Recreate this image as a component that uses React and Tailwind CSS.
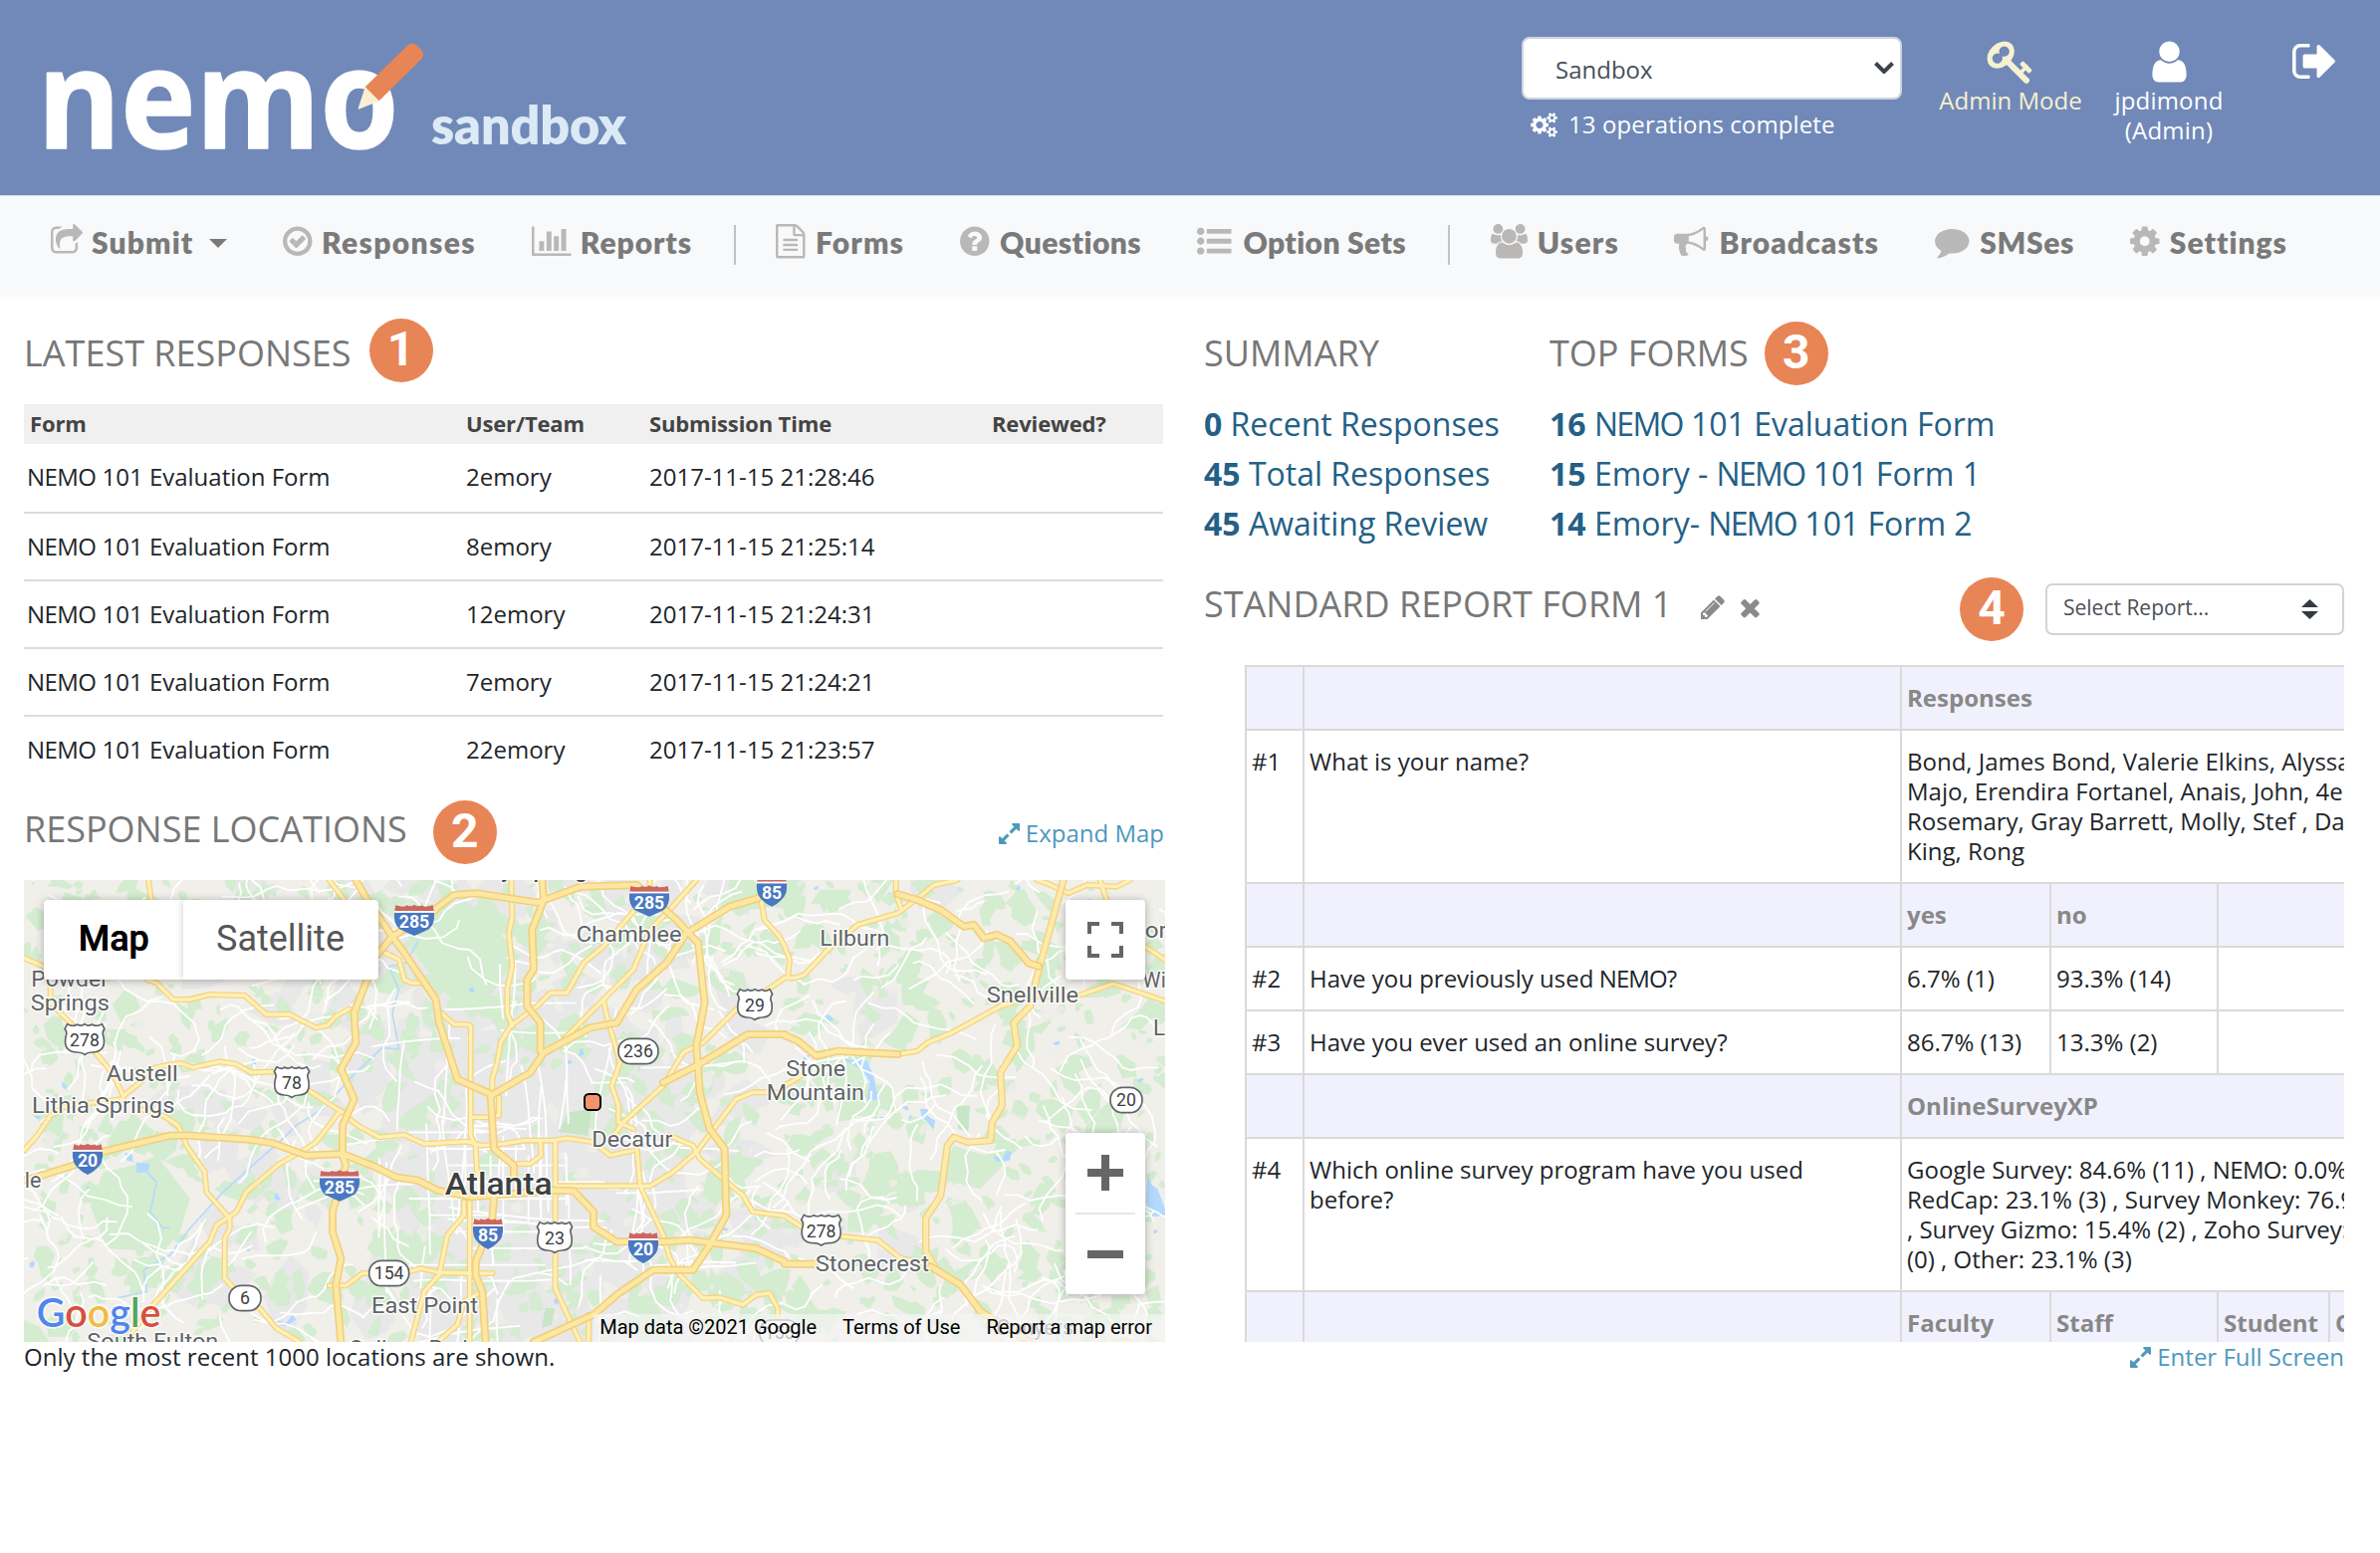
import React from "react";

/* ---------- Icons ---------- */

const ICONS = {
  share: ["64 0 1664 1792", "M1472 989v259q0 119-84.5 203.5t-203.5 84.5h-832q-119 0-203.5-84.5t-84.5-203.5v-832q0-119 84.5-203.5t203.5-84.5h255q13 0 22.5 9.5t9.5 22.5q0 27-26 32-77 26-133 60-10 4-16 4h-112q-66 0-113 47t-47 113v832q0 66 47 113t113 47h832q66 0 113-47t47-113v-214q0-19 18-29 28-13 54-37 16-16 35-8 21 9 21 29zm237-496l-384 384q-18 19-45 19-12 0-25-5-39-17-39-59v-192h-160q-323 0-438 131-119 137-74 473 3 23-20 34-8 2-12 2-16 0-26-13-10-14-21-31t-39.5-68.5-49.5-99.5-38.5-114-17.5-122q0-49 3.5-91t14-90 28-88 47-81.5 68.5-74 94.5-61.5 124.5-48.5 159.5-30.5 196.5-11h160v-192q0-42 39-59 13-5 25-5 26 0 45 19l384 384q19 19 19 45t-19 45z"],
  check: ["128 0 1536 1792", "M1299 813l-422 422q-19 19-45 19t-45-19l-294-294q-19-19-19-45t19-45l102-102q19-19 45-19t45 19l147 147 275-275q19-19 45-19t45 19l102 102q19 19 19 45t-19 45zm141 83q0-148-73-273t-198-198-273-73-273 73-198 198-73 273 73 273 198 198 273 73 273-73 198-198 73-273zm224 0q0 209-103 385.5t-279.5 279.5-385.5 103-385.5-103-279.5-279.5-103-385.5 103-385.5 279.5-279.5 385.5-103 385.5 103 279.5 279.5 103 385.5z"],
  chart: ["0 0 2048 1792", "M640 896v512h-256v-512h256zm384-512v1024h-256v-1024h256zm1024 1152v128h-2048v-1536h128v1408h1920zm-640-896v768h-256v-768h256zm384-384v1152h-256v-1152h256z"],
  file: ["128 0 1536 1792", "M1596 380q28 28 48 76t20 88v1152q0 40-28 68t-68 28h-1344q-40 0-68-28t-28-68v-1600q0-40 28-68t68-28h896q40 0 88 20t76 48zm-444-244v376h376q-10-29-22-41l-313-313q-12-12-41-22zm384 1528v-1024h-416q-40 0-68-28t-28-68v-416h-768v1536h1280zm-1024-864q0-14 9-23t23-9h704q14 0 23 9t9 23v64q0 14-9 23t-23 9h-704q-14 0-23-9t-9-23v-64zm736 224q14 0 23 9t9 23v64q0 14-9 23t-23 9h-704q-14 0-23-9t-9-23v-64q0-14 9-23t23-9h704zm0 256q14 0 23 9t9 23v64q0 14-9 23t-23 9h-704q-14 0-23-9t-9-23v-64q0-14 9-23t23-9h704z"],
  question: ["128 0 1536 1792", "M1024 1376v-192q0-14-9-23t-23-9h-192q-14 0-23 9t-9 23v192q0 14 9 23t23 9h192q14 0 23-9t9-23zm256-672q0-88-55.5-163t-138.5-116-170-41q-243 0-371 213-15 24 8 42l132 100q7 6 19 6 16 0 25-12 53-68 86-92 34-24 86-24 48 0 85.5 26t37.5 59q0 38-20 61t-68 45q-63 28-115.5 86.5t-52.5 125.5v36q0 14 9 23t23 9h192q14 0 23-9t9-23q0-19 21.5-49.5t54.5-49.5q32-18 49-28.5t46-35 44.5-48 28-60.5 12.5-81zm384 192q0 209-103 385.5t-279.5 279.5-385.5 103-385.5-103-279.5-279.5-103-385.5 103-385.5 279.5-279.5 385.5-103 385.5 103 279.5 279.5 103 385.5z"],
  list: ["0 0 1792 1792", "M384 1408q0 80-56 136t-136 56-136-56-56-136 56-136 136-56 136 56 56 136zm0-512q0 80-56 136t-136 56-136-56-56-136 56-136 136-56 136 56 56 136zm1408 416v192q0 13-9.5 22.5t-22.5 9.5h-1216q-13 0-22.5-9.5t-9.5-22.5v-192q0-13 9.5-22.5t22.5-9.5h1216q13 0 22.5 9.5t9.5 22.5zm-1408-928q0 80-56 136t-136 56-136-56-56-136 56-136 136-56 136 56 56 136zm1408 416v192q0 13-9.5 22.5t-22.5 9.5h-1216q-13 0-22.5-9.5t-9.5-22.5v-192q0-13 9.5-22.5t22.5-9.5h1216q13 0 22.5 9.5t9.5 22.5zm0-512v192q0 13-9.5 22.5t-22.5 9.5h-1216q-13 0-22.5-9.5t-9.5-22.5v-192q0-13 9.5-22.5t22.5-9.5h1216q13 0 22.5 9.5t9.5 22.5z"],
  users: ["0 0 1920 1792", "M593 896q-162 5-265 128h-134q-82 0-138-40.5t-56-118.5q0-353 124-353 6 0 43.5 21t97.5 42.5 119 21.5q67 0 133-23-5 37-5 66 0 143 81 256zm1071 637q0 120-73 189.5t-194 69.5h-874q-121 0-194-69.5t-73-189.5q0-53 3.5-103.5t14-109 26.5-108.5 43-97.5 62-81 85.5-53.5 111.5-20q10 0 43 21.5t73 48 107 48 135 21.5 135-21.5 107-48 73-48 43-21.5q61 0 111.5 20t85.5 53.5 62 81 43 97.5 26.5 108.5 14 109 3.5 103.5zm-1024-1277q0 106-75 181t-181 75-181-75-75-181 75-181 181-75 181 75 75 181zm704 384q0 159-112.5 271.5t-271.5 112.5-271.5-112.5-112.5-271.5 112.5-271.5 271.5-112.5 271.5 112.5 112.5 271.5zm576 225q0 78-56 118.5t-138 40.5h-134q-103-123-265-128 81-113 81-256 0-29-5-66 66 23 133 23 59 0 119-21.5t97.5-42.5 43.5-21q124 0 124 353zm-128-609q0 106-75 181t-181 75-181-75-75-181 75-181 181-75 181 75 75 181z"],
  horn: ["0 0 1792 1792", "M1664 640q53 0 90.5 37.5t37.5 90.5-37.5 90.5-90.5 37.5v384q0 52-38 90t-90 38q-417-347-812-380-58 19-91 66t-31 100.5 40 92.5q-20 33-23 65.5t6 58 33.5 55 48 50 61.5 50.5q-29 58-111.5 83t-168.5 11.5-132-55.5q-7-23-29.5-87.5t-32-94.5-23-89-15-101 3.5-98.5 22-110.5h-122q-66 0-113-47t-47-113v-192q0-66 47-113t113-47h480q435 0 896-384 52 0 90 38t38 90v384zm-128 604v-954q-394 302-768 343v270q377 42 768 341z"],
  comment: ["0 0 1792 1792", "M1792 896q0 174-120 321.5t-326 233-450 85.5q-70 0-145-8-198 175-460 242-49 14-114 22-17 2-30.5-9t-17.5-29v-1q-3-4-.5-12t2-10 4.5-9.5l6-9 7-8.5 8-9q7-8 31-34.5t34.5-38 31-39.5 32.5-51 27-59 26-76q-157-89-247.5-220t-90.5-281q0-130 71-248.5t191-204.5 286-136.5 348-50.5q244 0 450 85.5t326 233 120 321.5z"],
  cog: ["128 0 1536 1792", "M1152 896q0-106-75-181t-181-75-181 75-75 181 75 181 181 75 181-75 75-181zm512-109v222q0 12-8 23t-20 13l-185 28q-19 54-39 91 35 50 107 138 10 12 10 25t-9 23q-27 37-99 108t-94 71q-12 0-26-9l-138-108q-44 23-91 38-16 136-29 186-7 28-36 28h-222q-14 0-24.5-8.5t-11.5-21.5l-28-184q-49-16-90-37l-141 107q-10 9-25 9-14 0-25-11-126-114-165-168-7-10-7-23 0-12 8-23 15-21 51-66.5t54-70.5q-27-50-41-99l-183-27q-13-2-21-12.5t-8-23.5v-222q0-12 8-23t19-13l186-28q14-46 39-92-40-57-107-138-10-12-10-24 0-10 9-23 26-36 98.5-107.5t94.5-71.5q13 0 26 10l138 107q44-23 91-38 16-136 29-186 7-28 36-28h222q14 0 24.5 8.5t11.5 21.5l28 184q49 16 90 37l142-107q9-9 24-9 13 0 25 10 129 119 165 170 7 8 7 22 0 12-8 23-15 21-51 66.5t-54 70.5q26 50 41 98l183 28q13 2 21 12.5t8 23.5z"],
  cogs: ["0 0 1920 1792", "M896 896q0-106-75-181t-181-75-181 75-75 181 75 181 181 75 181-75 75-181zm768 512q0-52-38-90t-90-38-90 38-38 90q0 53 37.5 90.5t90.5 37.5 90.5-37.5 37.5-90.5zm0-1024q0-52-38-90t-90-38-90 38-38 90q0 53 37.5 90.5t90.5 37.5 90.5-37.5 37.5-90.5zm-384 421v185q0 10-7 19.5t-16 10.5l-155 24q-11 35-32 76 34 48 90 115 7 11 7 20 0 12-7 19-23 30-82.5 89.5t-78.5 59.5q-11 0-21-7l-115-90q-37 19-77 31-11 108-23 155-7 24-30 24h-186q-11 0-20-7.5t-10-17.5l-23-153q-34-10-75-31l-118 89q-7 7-20 7-11 0-21-8-144-133-144-160 0-9 7-19 10-14 41-53t47-61q-23-44-35-82l-152-24q-10-1-17-9.5t-7-19.5v-185q0-10 7-19.5t16-10.5l155-24q11-35 32-76-34-48-90-115-7-11-7-20 0-12 7-20 22-30 82-89t79-59q11 0 21 7l115 90q34-18 77-32 11-108 23-154 7-24 30-24h186q11 0 20 7.5t10 17.5l23 153q34 10 75 31l118-89q8-7 20-7 11 0 21 8 144 133 144 160 0 8-7 19-12 16-42 54t-45 60q23 48 34 82l152 23q10 2 17 10.5t7 19.5zm640 533v140q0 16-149 31-12 27-30 52 51 113 51 138 0 4-4 7-122 71-124 71-8 0-46-47t-52-68q-20 2-30 2t-30-2q-14 21-52 68t-46 47q-2 0-124-71-4-3-4-7 0-25 51-138-18-25-30-52-149-15-149-31v-140q0-16 149-31 13-29 30-52-51-113-51-138 0-4 4-7 4-2 35-20t59-34 30-16q8 0 46 46.5t52 67.5q20-2 30-2t30 2q51-71 92-112l6-2q4 0 124 70 4 3 4 7 0 25-51 138 17 23 30 52 149 15 149 31zm0-1024v140q0 16-149 31-12 27-30 52 51 113 51 138 0 4-4 7-122 71-124 71-8 0-46-47t-52-68q-20 2-30 2t-30-2q-14 21-52 68t-46 47q-2 0-124-71-4-3-4-7 0-25 51-138-18-25-30-52-149-15-149-31v-140q0-16 149-31 13-29 30-52-51-113-51-138 0-4 4-7 4-2 35-20t59-34 30-16q8 0 46 46.5t52 67.5q20-2 30-2t30 2q51-71 92-112l6-2q4 0 124 70 4 3 4 7 0 25-51 138 17 23 30 52 149 15 149 31z"],
  key: ["0 0 1792 1792", "M832 512q0-80-56-136t-136-56-136 56-56 136q0 42 19 83-41-19-83-19-80 0-136 56t-56 136 56 136 136 56 136-56 56-136q0-42-19-83 41 19 83 19 80 0 136-56t56-136zm851 704q0 17-49 66t-66 49q-9 0-28.5-16t-36.5-33-38.5-40-24.5-26l-96 96 220 220q28 28 28 68 0 42-39 81t-81 39q-40 0-68-28l-671-671q-176 131-365 131-163 0-265.5-102.5t-102.5-265.5q0-160 95-313t248-248 313-95q163 0 265.5 102.5t102.5 265.5q0 189-131 365l355 355 96-96q-3-3-26-24.5t-40-38.5-33-36.5-16-28.5q0-17 49-66t66-49q13 0 23 10 6 6 46 44.5t82 79.5 86.5 86 73 78 28.5 41z"],
  user: ["256 0 1280 1792", "M1536 1399q0 109-62.5 187t-150.5 78h-854q-88 0-150.5-78t-62.5-187q0-85 8.5-160.5t31.5-152 58.5-131 94-89 134.5-34.5q131 128 313 128t313-128q76 0 134.5 34.5t94 89 58.5 131 31.5 152 8.5 160.5zm-256-887q0 159-112.5 271.5t-271.5 112.5-271.5-112.5-112.5-271.5 112.5-271.5 271.5-112.5 271.5 112.5 112.5 271.5z"],
  signout: ["64 0 1568 1792", "M704 1440q0 4 1 20t.5 26.5-3 23.5-10 19.5-20.5 6.5h-320q-119 0-203.5-84.5t-84.5-203.5v-704q0-119 84.5-203.5t203.5-84.5h320q13 0 22.5 9.5t9.5 22.5q0 4 1 20t.5 26.5-3 23.5-10 19.5-20.5 6.5h-320q-66 0-113 47t-47 113v704q0 66 47 113t113 47h312l11.5 1 11.5 3 8 5.5 7 9 2 13.5zm928-544q0 26-19 45l-544 544q-19 19-45 19t-45-19-19-45v-288h-448q-26 0-45-19t-19-45v-384q0-26 19-45t45-19h448v-288q0-26 19-45t45-19 45 19l544 544q19 19 19 45z"],
  expand: ["128 128 1536 1536", "M883 1056q0 13-10 23l-332 332 144 144q19 19 19 45t-19 45-45 19h-448q-26 0-45-19t-19-45v-448q0-26 19-45t45-19 45 19l144 144 332-332q10-10 23-10t23 10l114 114q10 10 10 23zm781-864v448q0 26-19 45t-45 19-45-19l-144-144-332 332q-10 10-23 10t-23-10l-114-114q-10-10-10-23t10-23l332-332-144-144q-19-19-19-45t19-45 45-19h448q26 0 45 19t19 45z"],
  pencil: ["128 128 1536 1536", "M491 1536l91-91-235-235-91 91v107h128v128h107zm523-928q0-22-22-22-10 0-17 7l-542 542q-7 7-7 17 0 22 22 22 10 0 17-7l542-542q7-7 7-17zm-54-192l416 416-832 832h-416v-416zm683 96q0 53-37 90l-166 166-416-416 166-165q36-38 90-38 53 0 91 38l235 234q37 39 37 91z"],
  times: ["302 302 1188 1284", "M1490 1322q0 40-28 68l-136 136q-28 28-68 28t-68-28l-294-294-294 294q-28 28-68 28t-68-28l-136-136q-28-28-28-68t28-68l294-294-294-294q-28-28-28-68t28-68l136-136q28-28 68-28t68 28l294 294 294-294q28-28 68-28t68 28l136 136q28 28 28 68t-28 68l-294 294 294 294q28 28 28 68z"],
};

function Icon({ name, className }) {
  const [box, d] = ICONS[name];
  return (
    <svg viewBox={box} className={className} fill="currentColor" aria-hidden="true">
      <path d={d} />
    </svg>
  );
}

/* ---------- Header ---------- */

function Logo() {
  return (
    <svg viewBox="30 30 400 130" className="ml-[30px] mt-[30px] h-[130px] w-[400px] shrink-0">
      <text x="37.5" y="149" textLength="363" lengthAdjust="spacingAndGlyphs" fill="#fff" stroke="#fff" strokeWidth="1.6" strokeLinejoin="round" fontFamily="Open Sans, sans-serif" fontWeight="700" fontSize="138">
        nemo
      </text>
      <path d="M360 109.3 L367 88 L381 101Z" fill="#fbeed6" stroke="#fbeed6" strokeWidth="1" strokeLinejoin="round" />
      <path d="M366.7 87.3 L409 46 Q414 41.5 419 46 L423 50 Q427 55 422.5 60 L380.7 101.3Z" fill="#e88556" />
    </svg>
  );
}

function Header() {
  return (
    <header className="flex h-[196px] items-start bg-[#7189b8] text-2xl leading-[30px] text-white">
      <Logo />
      <div className="mt-[95px] ml-[3px] font-['Lato',sans-serif] text-[52px] leading-[60px] font-extrabold tracking-[-0.1px] text-[#dceaf6]">sandbox</div>
      <div className="mt-[37px] ml-auto w-[382px]">
        <div className="flex h-[63px] items-center justify-between rounded-lg border-2 border-[#ced4da] bg-white pr-[6px] pl-8 text-[#495057]">
          <span className="pt-[3px]">Sandbox</span>
          <svg viewBox="0 0 20 12" className="mb-px h-3 w-5" fill="none" stroke="#3d444b" strokeWidth="4">
            <path d="M1.5 1.5 L10 10 L18.500 1.500" />
          </svg>
        </div>
        <div className="mt-[10px] ml-[9px] flex items-center gap-[11px] tracking-[0.1px]">
          <Icon name="cogs" className="h-[25px] w-[27px]" />
          <span>13 operations complete</span>
        </div>
      </div>
      <div className="mt-[38px] ml-[29px] flex w-[160px] flex-col items-center text-[#f6f1d0]">
        <Icon name="key" className="h-12 w-[49px]" />
        <span>Admin Mode</span>
      </div>
      <div className="mt-[38px] ml-[17px] flex w-[124px] flex-col items-center tracking-[0.2px]">
        <Icon name="user" className="h-12 w-[35px]" />
        <span>jpdimond</span>
        <span>(Admin)</span>
      </div>
      <Icon name="signout" className="mt-[37px] mr-[45px] ml-[62px] h-[49px] w-[43px]" />
    </header>
  );
}

/* ---------- Navigation ---------- */

const NAV = [
  { icon: "share", iconCls: "w-8", label: "Submit", cls: "ml-[51px] w-[177px]", track: "ml-[9px] mr-auto tracking-[1.1px]", caret: true },
  { icon: "check", iconCls: "w-[29.5px]", label: "Responses", cls: "ml-[56px] w-[194px]", track: "tracking-[1.35px]" },
  { icon: "chart", iconCls: "w-[39.5px]", label: "Reports", cls: "ml-[56px] w-[161px]", track: "tracking-[0.9px]" },
  null,
  { icon: "file", iconCls: "w-[29.5px]", label: "Forms", cls: "ml-[40px] w-[129px]", track: "tracking-[1.1px]" },
  { icon: "question", iconCls: "w-[29.5px]", label: "Questions", cls: "ml-[56px] w-[182px]", track: "tracking-[0.4px]" },
  { icon: "list", iconCls: "w-[34.5px]", label: "Option Sets", cls: "ml-[56px] w-[210px]", track: "tracking-[0.35px]" },
  null,
  { icon: "users", iconCls: "w-[37px]", label: "Users", cls: "ml-[41px] w-[129px]", track: "tracking-[1.2px]" },
  { icon: "horn", iconCls: "w-[34.5px]", label: "Broadcasts", cls: "ml-[55px] w-[206px]", track: "tracking-[1.09px]" },
  { icon: "comment", iconCls: "w-[34.5px]", label: "SMSes", cls: "ml-[56px] w-[140px]", track: "tracking-[0.65px]" },
  { icon: "cog", iconCls: "w-[29.5px]", label: "Settings", cls: "ml-[56px] w-[158px]", track: "tracking-[1px]" },
];

function Nav() {
  return (
    <nav className="flex h-[102px] items-start border-t border-[#d5dced] bg-[#f8f9fb] pt-7 font-['Lato',sans-serif] text-[30px] leading-9 font-extrabold text-[#7a7a7a]">
      {NAV.map((n, i) =>
        n ? (
          <a key={i} className={`flex shrink-0 justify-between ${n.cls}`}>
            <Icon name={n.icon} className={`h-[34.5px] shrink-0 text-[#bab8b6] ${n.iconCls}`} />
            <span className={`whitespace-nowrap ${n.track}`}>{n.label}</span>
            {n.caret && <span className="mt-[15px] h-0 w-0 border-x-[9px] border-t-[9px] border-x-transparent border-t-[#7a7a7a]" />}
          </a>
        ) : (
          <span key={i} className="mt-[1px] ml-[42px] h-10 w-[2px] bg-[#c2c2c2]" />
        )
      )}
    </nav>
  );
}

function Badge({ children, className }) {
  return (
    <span className={`flex h-16 w-16 shrink-0 items-center justify-center rounded-full bg-[#e88556] pb-[3px] font-['Roboto',sans-serif] text-[48px] leading-none font-bold text-white ${className}`}>
      {children}
    </span>
  );
}

/* ---------- Map ---------- */

function rng(seed) {
  let a = seed;
  return () => {
    a = (a + 0x6d2b79f5) | 0;
    let t = Math.imul(a ^ (a >>> 15), 1 | a);
    t = (t + Math.imul(t ^ (t >>> 7), 61 | t)) ^ t;
    return ((t ^ (t >>> 14)) >>> 0) / 4294967296;
  };
}

function blob(r, cx, cy, size) {
  const n = 5 + Math.floor(r() * 4);
  const rot = r() * Math.PI;
  const sq = 0.4 + r() * 0.5;
  let d = "";
  for (let i = 0; i < n; i++) {
    const a = (i / n) * Math.PI * 2;
    const rad = size * (0.45 + r() * 0.8);
    const x = Math.cos(a) * rad;
    const y = Math.sin(a) * rad * sq;
    d += `${i ? "L" : "M"}${(cx + x * Math.cos(rot) - y * Math.sin(rot)).toFixed(0)} ${(cy + x * Math.sin(rot) + y * Math.cos(rot)).toFixed(0)}`;
  }
  return d + "Z";
}

function terrain() {
  const r = rng(77);
  let urban = "";
  let park = "";
  let sand = "";
  let lake = "";
  for (let i = 0; i < 190; i++) {
    const x = (r() + r() + r()) / 3 * 2900 + 60;
    urban += blob(r, x, r() * 1392, 50 + r() * 70);
  }
  for (let i = 0; i < 1150; i++) {
    const x = r() * 3438;
    const y = r() * 1392;
    const downtown = Math.hypot(x - 1480, y - 880) < 300;
    if (downtown && r() < 0.75) continue;
    park += blob(r, x, y, 14 + r() * r() * 68);
  }
  for (let i = 0; i < 220; i++) sand += blob(r, r() * 3438, r() * 1392, 12 + r() * 22);
  for (let i = 0; i < 40; i++) lake += blob(r, r() * 3438, r() * 1392, 5 + r() * 9);
  return { urban, park, sand, lake };
}

function streets() {
  const r = rng(2021);
  let d = "";
  for (let i = 0; i < 350; i++) {
    let x = r() * 3438;
    let y = r() * 1392;
    const center = Math.hypot(x - 1550, y - 850) < 520;
    const grid = center && r() < 0.6;
    let a = grid ? Math.floor(r() * 4) * (Math.PI / 2) : r() * Math.PI * 2;
    d += `M${x.toFixed(0)} ${y.toFixed(0)}`;
    const n = 4 + Math.floor(r() * 8);
    for (let k = 0; k < n; k++) {
      a += (r() - 0.5) * (grid ? 0.15 : 1.5);
      const s = 20 + r() * 36;
      x += Math.cos(a) * s;
      y += Math.sin(a) * s;
      d += `L${x.toFixed(0)} ${y.toFixed(0)}`;
    }
  }
  for (let k = 0; k < 9; k++) {
    d += `M${1330 + k * 38} ${770 + (k % 3) * 30}v${150 + (k % 4) * 50}`;
    d += `M${1160 + (k % 4) * 60} ${760 + k * 50}h${230 + (k % 5) * 60}`;
  }
  return d;
}

const LAND = terrain();
const STREETS = streets();

const ROADS = [
  ["M0 235L60 260", "M375 0L385 70", "M80 320V370L150 440L265 580L300 650", "M370 300L400 310L450 360H500L560 345L665 348L730 405H800L880 445L915 438L940 410L980 388", "M300 650L350 610L380 570L420 560L470 552L510 565L590 547L640 555L685 580L770 577L860 635L920 675L960 700", "M0 815L40 770L80 710L130 680L300 660", "M350 690L420 710L465 740L490 800L545 880L550 940L620 1020V1050L605 1080V1200L660 1260L710 1290L760 1350L830 1392", "M950 700L880 790L850 810L770 855L670 940L640 1000L580 1040L560 1090L390 1280L320 1370", "M920 1222H970L1020 1185H1060", "M920 0L965 60", "M980 720L1010 742L1070 775L1146 768", "M1080 215L1130 240L1146 300L1166 310H1206"],
  ["M322 0L325 110L315 160L325 260L310 330V400L325 440", "M690 95L600 200L540 250L490 340H440L400 380L320 440L290 490L280 550L265 600V650", "M880 0L790 100L740 150L690 270L600 360L470 490L430 520", "M600 360L610 410L650 550L625 620L645 680V730L690 750", "M110 400L150 435H190Q200 436 200 446V770L215 800L220 900", "M200 715H270", "M0 768L60 795L190 788L230 800L300 795L360 785H450L490 778L570 790L620 830L690 815", "M455 785V1230L500 1330L530 1392", "M455 922H740L810 880L880 820L1000 660L1050 640H1146", "M700 800L710 920L780 1070L800 1140L830 1190L900 1260L950 1258L1020 1280L1060 1250L1100 1245L1125 1290V1392", "M800 770L870 800L890 840L960 900L1020 950L1050 1000L1146 1012L1196 1045L1326 1075L1426 1085L1496 1140L1586 1160", "M180 970V1010L130 1070L105 1190L60 1240L20 1392", "M197 970V1392", "M0 1185L50 1170L100 1182L200 1185H265", "M410 785L412 830L380 855H340", "M235 1240L180 1270L160 1340L100 1392", "M1146 295L1110 320L1000 390L900 490L840 520L780 620L660 730L630 770", "M1070 30L1085 120L1130 170L1146 200L1161 240L1156 290", "M740 50V0", "M285 655V710H270", "M555 1310V1392"],
  ["M335 0V40L350 85", "M0 295H30L60 285L130 210L220 135L340 100L400 55L450 15L520 0", "M340 525L400 515L430 490L500 462L550 435L650 380L750 350H880L990 312L1146 365", "M760 0L790 10L855 40L910 15L1000 20L1040 0", "M950 0L970 60", "M1085 200L1146 240", "M1000 1392L1040 1392", "M0 620L50 590"],
];

const MID_ROADS = "M840 0L760 290L740 380L690 430L700 500L650 580L655 680L625 730L620 785L550 790L510 775L490 800L470 950L425 1020V1120L450 1160";

const FREEWAYS = [
  ["M0 905L60 888L150 860L240 818L440 770H500L680 782L750 793L850 830L960 825L1060 865L1120 895L1186 905L1246 935L1346 955L1480 945L1596 935L1656 937L1716 1000V1045L1786 1090H1936L2006 1085L2206 1110L2292 1150L2292 1157H2382", "M1000 0L1040 70L1110 170L1146 220L1241 360L1251 430L1306 600L1406 645", "M1240 90L1110 170L1060 230L1030 310L995 400L1000 490L955 570L995 660L960 740V830L970 860L930 1000V1060L955 1140L940 1220L955 1392"],
  ["M90 90L150 45L220 40L400 68L530 20L700 15L820 120L885 190L905 370L880 500L890 640L920 750L965 810L970 1010L920 1100L870 1175H750L640 1250L570 1310L390 1392", "M1065 55L980 80L850 160L790 250L700 330L640 430L560 445L420 520L380 580L260 650L270 810L330 860V900", "M270 960L265 1020L240 1090L215 1150V1190L235 1240L245 1392", "M415 0L420 60L385 150L390 270L370 300V380L410 430V515", "M780 610L880 560L1035 465H1146"],
  ["M0 468L40 485L95 530L160 515L240 520L340 525", "M340 42L400 60L470 90L540 140L570 135L600 175L640 165L680 185L735 250L765 260", "M440 1165L530 1220L590 1300L740 1392"],
];

const OFFSETS = [0, 1146, 2292];

function RoadLayer({ groups, color, width }) {
  return groups.map((g, i) => (
    <g key={i} transform={`translate(${OFFSETS[i]} 0)`} fill="none" stroke={color} strokeWidth={width} strokeLinecap="round" strokeLinejoin="round">
      {g.map((d, k) => (
        <path key={k} d={d} />
      ))}
    </g>
  ));
}

const PLACES = [
  [22, 320, 233, "Powder"], [20, 394, 238, "Springs"], [248, 606, 216, "Austell"], [24, 703, 430, "Lithia Springs"], [2, 928, 50, "le"],
  [190, 1414, 396, "South Fulton"], [978, 1434, 378, "College Park"], [1047, 1305, 321, "East Point"], [1711, 803, 243, "Decatur"],
  [1664, 187, 318, "Chamblee"], [2398, 199, 210, "Lilburn"], [2900, 370, 277, "Snellville"], [2296, 592, 179, "Stone"], [2237, 662, 295, "Mountain"],
  [2384, 1180, 343, "Stonecrest"], [3377, 175, 66, "or"], [3370, 325, 70, "Wi"], [3402, 467, 36, "L"], [2929, 1372, 233, "Conyers"],
];

function Interstate({ x, y, n }) {
  const w = n.length > 2 ? 60 : 45;
  return (
    <g transform={`translate(${x} ${y})`}>
      <path d={`M${-w} -22 Q${-w - 3} 12 ${-w + 16} 28 Q-16 42 0 48 Q16 42 ${w - 16} 28 Q${w + 3} 12 ${w} -22Z`} fill="#4878c2" />
      <path d={`M${-w + 1} -27 L${-w + 4} -44 Q${-w / 2} -36 -22 -44 Q-10 -38 0 -46 Q10 -38 22 -44 Q${w / 2} -36 ${w - 4} -44 L${w - 1} -27Z`} fill="#cc6660" />
      <path d={`M${-w} -27H${w}V-22H${-w}Z`} fill="#fff" />
      <text x="0" y="25" textAnchor="middle" fontFamily="Roboto, sans-serif" fontWeight="700" fontSize="53" fill="#fff">{n}</text>
    </g>
  );
}

function UsShield({ x, y, n }) {
  const w = n.length > 2 ? 60 : 53;
  return (
    <g transform={`translate(${x} ${y})`}>
      <path
        d={`M${-w + 8} -44 Q${-w + 24} -34 -22 -43 Q-10 -36 0 -44 Q10 -36 22 -43 Q${w - 24} -34 ${w - 8} -44 L${w} -29 Q${w - 9} -20 ${w - 3} -5 Q${w + 6} 40 22 41 Q8 41 0 48 Q-8 41 -22 41 Q${-w - 6} 40 ${-w + 3} -5 Q${-w + 9} -20 ${-w} -29Z`}
        fill="#fff" stroke="#5f6368" strokeWidth="5" strokeLinejoin="round"
      />
      <text x="0" y="24" textAnchor="middle" fontFamily="Roboto, sans-serif" fontSize="53" fill="#3c4043">{n}</text>
    </g>
  );
}

function Oval({ x, y, n }) {
  const w = n.length > 2 ? 60 : 48;
  return (
    <g transform={`translate(${x} ${y})`}>
      <rect x={-w} y="-38" width={w * 2} height="76" rx="37" fill="#fff" stroke="#5f6368" strokeWidth="5" />
      <text x="0" y="19" textAnchor="middle" fontFamily="Roboto, sans-serif" fontSize="53" fill="#3c4043">{n}</text>
    </g>
  );
}

function MapCanvas() {
  return (
    <svg viewBox="0 0 3438 1392" preserveAspectRatio="none" className="block h-[464px] w-[1146px]">
      <rect width="3438" height="1392" fill="#f0efea" />
      <path d={LAND.urban} fill="#e8e8e8" />
      <path d="M1146 480L1500 440L1700 560L2000 640L1950 900L1850 1150L1500 1350L1300 1330L1150 1100L1060 800Z" fill="#e8e8e8" />
      <path d={LAND.park} fill="#d4ecd0" />
      <path d={LAND.sand} fill="#efeee9" opacity=".8" />
      <path d="M240 880L330 860L400 830L500 960L470 1060L420 1120L250 1110L200 980ZM1160 60L1300 90L1400 70L1440 300L1350 420L1260 330L1160 200ZM330 1140L430 1130L400 1230L300 1220ZM2800 800L2960 850L2880 930L2760 900ZM2470 600L2590 620L2570 720L2450 700Z" fill="#d4ecd0" />
      <path d="M1640 700L1710 690L1700 770L1610 760ZM2810 680L2850 680L2845 760L2815 750ZM1570 1290L1600 1290L1590 1340L1560 1350Z" fill="#c8e6c6" />
      <path d={LAND.lake} fill="#b3dafe" />
      <path d="M305 822L325 825L330 850L380 855L375 880L340 882L338 850L310 845ZM2470 540L2540 545L2560 590L2570 640L2582 662L2540 664L2548 610L2525 570L2475 545ZM2700 690L2725 690L2722 710L2745 725L2740 752L2718 725L2705 715ZM2920 832L2950 838L2960 815L2975 820L2970 845L2930 850ZM3385 890L3400 920L3415 930L3438 990V1010L3400 1015L3380 970ZM765 1325L790 1335L810 1310L820 1325L790 1345L765 1340Z" fill="#b3dafe" />
      <g fill="none" stroke="#b7dafa" strokeWidth="5" strokeLinejoin="round">
        <path d="M360 1175L440 1130L500 1050L600 940L700 850L780 780L820 740L900 690L1000 580L1080 505L1130 510L1110 400L1130 330L1100 260L1150 250L1190 180" />
        <path d="M370 880L400 910L380 1000L420 1050L440 1045M360 1175L370 1240L280 1260" />
      </g>
      <path d={STREETS} fill="none" stroke="#fff" strokeWidth="5.500" strokeLinejoin="round" />
      <RoadLayer groups={ROADS} color="#f4d484" width="18" />
      <RoadLayer groups={ROADS} color="#fff0b5" width="10" />
      <RoadLayer groups={[[], [], [MID_ROADS]]} color="#f2d080" width="22" />
      <RoadLayer groups={[[], [], [MID_ROADS]]} color="#feeaab" width="14" />
      <RoadLayer groups={FREEWAYS} color="#f2cf7c" width="24" />
      <RoadLayer groups={FREEWAYS} color="#fde8a3" width="14" />
      <g fontFamily="Roboto, sans-serif" fontSize="68" fill="#5f6469" stroke="#fff" strokeOpacity=".85" strokeWidth="9" strokeLinejoin="round" paintOrder="stroke">
        {PLACES.map(([x, y, w, t]) => (
          <text key={t} x={x} y={y} textLength={w} lengthAdjust="spacingAndGlyphs">{t}</text>
        ))}
        <text x="1275" y="-8" textLength="460" fontWeight="500" fill="#4a4d50">Sandy Springs</text>
        <text x="1268" y="948" textLength="324" lengthAdjust="spacingAndGlyphs" fontWeight="500" fontSize="95" fill="#3c4043">Atlanta</text>
      </g>
      <Interstate x={192} y={840} n="20" />
      <Interstate x={951} y={920} n="285" />
      <Interstate x={1176} y={120} n="285" />
      <Interstate x={1884} y={62} n="285" />
      <Interstate x={2253} y={32} n="85" />
      <Interstate x={1398} y={1065} n="85" />
      <Interstate x={1866} y={1107} n="20" />
      <UsShield x={183} y={478} n="278" />
      <UsShield x={807} y={607} n="78" />
      <UsShield x={2202} y={373} n="29" />
      <UsShield x={1599} y={1075} n="23" />
      <UsShield x={2402} y={1053} n="278" />
      <Oval x={1100} y={1185} n="154" />
      <Oval x={666} y={1260} n="6" />
      <Oval x={1851} y={516} n="236" />
      <Oval x={3321} y={663} n="20" />
      <Oval x={2276} y={1364} n="155" />
      <rect x="1689" y="645" width="48" height="48" rx="13" fill="#f0946d" stroke="#000" strokeWidth="6" />
      <text x="38" y="1346" textLength="374" lengthAdjust="spacingAndGlyphs" fontFamily="Lato, sans-serif" fontWeight="600" fontSize="119" stroke="#fff" strokeOpacity=".75" strokeWidth="10" paintOrder="stroke">
        <tspan fill="#5186ec">G</tspan><tspan fill="#d85040">o</tspan><tspan fill="#f1bd42">o</tspan><tspan fill="#5186ec">g</tspan><tspan fill="#58a55c">l</tspan><tspan fill="#d85040">e</tspan>
      </text>
    </svg>
  );
}

function MapPanel() {
  return (
    <div className="relative h-[464px] w-[1146px] overflow-hidden font-['Roboto',sans-serif]">
      <MapCanvas />
      <div className="absolute top-5 left-5 flex h-20 w-[336px] overflow-hidden rounded-[4px] bg-white text-[36px] leading-[79px] shadow-[0_1px_8px_rgba(0,0,0,0.3)]">
        <div className="w-[140px] text-center font-medium text-black [text-shadow:0.5px_0_0_#000]">Map</div>
        <div className="w-[196px] pr-px text-center text-[#565656] shadow-[0_0_8px_rgba(0,0,0,0.2)]">Satellite</div>
      </div>
      <div className="absolute top-5 right-5 flex h-20 w-20 items-center justify-center rounded-[4px] bg-white shadow-[0_1px_8px_rgba(0,0,0,0.3)]">
        <svg viewBox="0 0 36 36" className="h-9 w-9" fill="none" stroke="#666" strokeWidth="4">
          <path d="M2 12V2H12M24 2H34V12M34 24V34H24M12 34H2V24" />
        </svg>
      </div>
      <div className="absolute top-[254px] right-5 flex h-[162px] w-20 flex-col items-center rounded-[4px] bg-white shadow-[0_1px_8px_rgba(0,0,0,0.3)]">
        <svg viewBox="0 0 36 36" className="mt-[22px] h-9 w-9" fill="#666">
          <path d="M14 0h8v14h14v8H22v14h-8V22H0v-8h14z" />
        </svg>
        <div className="mt-[22px] h-[2px] w-[60px] bg-[#e6e6e6]" />
        <div className="mt-9 h-2 w-9 bg-[#666]" />
      </div>
      <div className="absolute right-0 bottom-0 flex h-7 gap-[26px] bg-[#f5f5f5]/70 pr-[13px] pl-[6px] text-[20px] leading-[26px] whitespace-nowrap text-black">
        <span>Map data ©2021 Google</span>
        <span>Terms of Use</span>
        <span className="tracking-[-0.02px]">Report a map error</span>
      </div>
    </div>
  );
}

/* ---------- Left column ---------- */

const RESPONSES = [
  ["2emory", "2017-11-15 21:28:46"],
  ["8emory", "2017-11-15 21:25:14"],
  ["12emory", "2017-11-15 21:24:31"],
  ["7emory", "2017-11-15 21:24:21"],
  ["22emory", "2017-11-15 21:23:57"],
];

function LeftColumn() {
  return (
    <section className="w-[1146px] shrink-0">
      <div className="flex h-[108px] items-start">
        <h2 className="mt-[32px] text-[36px] leading-[50px] text-[#777]">LATEST RESPONSES</h2>
        <Badge className="mt-[22px] ml-[18px]">1</Badge>
      </div>
      <div className="w-[1144px]">
        <div className="grid h-10 grid-cols-[444px_184px_344px_1fr] bg-[#f0f0f0] text-[22px] leading-[39px] font-bold tracking-[-0.15px] text-[#444]">
          <span className="pl-[6px]">Form</span>
          <span>User/Team</span>
          <span>Submission Time</span>
          <span>Reviewed?</span>
        </div>
        {RESPONSES.map(([user, time], i) => (
          <div
            key={user}
            className={`grid grid-cols-[444px_184px_344px_1fr] text-2xl text-[#212529] ${i === 0 ? "h-[70px] leading-[66px]" : "h-[68px] leading-[66px]"} ${i < 4 ? "border-b-2 border-[#dcdcdc]" : ""}`}
          >
            <span className="pl-[3px]"><span className="tracking-[-0.6px]">NEMO</span> 101 Evaluation Form</span>
            <span>{user}</span>
            <span>{time}</span>
          </div>
        ))}
      </div>
      <div className="flex h-[96px] items-start text-2xl">
        <h2 className="mt-[20px] text-[36px] leading-[50px] text-[#777]">RESPONSE LOCATIONS</h2>
        <Badge className="mt-4 ml-[26px]">2</Badge>
        <a className="mt-[34px] ml-auto flex items-center gap-[6px] pr-px leading-[30px] text-[#4f98bd]">
          <Icon name="expand" className="h-[21px] w-[21px]" />
          Expand Map
        </a>
      </div>
      <MapPanel />
      <p className="pt-px text-2xl leading-7 tracking-[0.02px] text-[#212529]">Only the most recent 1000 locations are shown.</p>
    </section>
  );
}

/* ---------- Right column ---------- */

const HEAD = "bg-[#f1f1fd] font-bold text-[#888]";

function Row({ cells, head, tall, cols }) {
  return (
    <div className={`grid w-[1300px] ${cols} ${tall ? "h-[154px]" : "h-[64px]"} ${head ? HEAD : "bg-white text-[#212529]"}`}>
      {cells.map((c, i) => (
        <div key={i} className="border-t-2 border-l-2 border-[#dadada] pt-4 pl-[5px] text-2xl leading-[30px] whitespace-nowrap">
          {c}
        </div>
      ))}
    </div>
  );
}

const WIDE = "grid-cols-[58px_600px_642px]";
const SPLIT = "grid-cols-[58px_600px_150px_168px_324px]";
const FOUR = "grid-cols-[58px_600px_150px_168px_112px_212px]";

function ReportTable() {
  return (
    <div className="mt-[30px] ml-[41px] h-[680px] w-[1104px] overflow-hidden">
      <Row cols={WIDE} head cells={["", "", "Responses"]} />
      <Row
        cols={WIDE}
        tall
        cells={[
          "#1",
          "What is your name?",
          <>
            Bond, James Bond, Valerie Elkins, Alyssa,
            <br />
            Majo, Erendira Fortanel, Anais, John, 4emory,
            <br />
            Rosemary, Gray Barrett, Molly, Stef , Dana
            <br />
            King, Rong
          </>,
        ]}
      />
      <Row cols={SPLIT} head cells={["", "", "yes", "no", ""]} />
      <Row
        cols={SPLIT}
        cells={[
          "#2",
          <>
            Have you previously used<span className="tracking-[-0.9px]"> NEMO</span>?
          </>,
          "6.7% (1)",
          "93.3% (14)",
          "",
        ]}
      />
      <Row cols={SPLIT} cells={["#3", "Have you ever used an online survey?", "86.7% (13)", "13.3% (2)", ""]} />
      <Row cols={WIDE} head cells={["", "", "OnlineSurveyXP"]} />
      <Row
        cols={WIDE}
        tall
        cells={[
          "#4",
          <>
            Which online survey program have you used
            <br />
            before?
          </>,
          <>
            Google Survey: 84.6% (11) , <span className="tracking-[-0.6px]">NEMO</span>: 0.0% (0) ,
            <br />
            RedCap: 23.1% (3) , Survey Monkey: 76.9% (10)
            <br />, Survey Gizmo: 15.4% (2) , Zoho Survey: 0.0%
            <br />
            (0) , Other: 23.1% (3)
          </>,
        ]}
      />
      <Row cols={FOUR} head cells={["", "", "Faculty", "Staff", "Student", "Other"]} />
    </div>
  );
}

function Nemo() {
  return <span className="tracking-[-1.7px]">NEMO</span>;
}

function RightColumn() {
  return (
    <section className="ml-[39px] w-[1145px] shrink-0">
      <div className="flex">
        <div className="w-[347px]">
          <h2 className="mt-[32px] mb-[21px] text-[36px] leading-[50px] text-[#777]">SUMMARY</h2>
          <div className="text-[32px] leading-[50px] whitespace-nowrap text-[#246086]">
            <div><b>0</b> Recent Responses</div>
            <div><b>45</b> Total Responses</div>
            <div><b>45</b> Awaiting Review</div>
          </div>
        </div>
        <div>
          <div className="flex h-[103px] items-start">
            <h2 className="mt-[32px] text-[36px] leading-[50px] text-[#777]">TOP FORMS</h2>
            <Badge className="mt-[25px] ml-4">3</Badge>
          </div>
          <div className="text-[32px] leading-[50px] whitespace-nowrap text-[#246086]">
            <div><b>16</b> <Nemo /> 101 Evaluation Form</div>
            <div><b>15</b> Emory - <Nemo /> 101 Form 1</div>
            <div><b>14</b> Emory- <Nemo /> 101 Form 2</div>
          </div>
        </div>
      </div>
      <div className="mt-[29px] flex h-[58px] items-start">
        <h2 className="mt-[2px] text-[36px] leading-[50px] text-[#777]">STANDARD REPORT FORM 1</h2>
        <Icon name="pencil" className="mt-[18px] ml-[29px] h-[24px] w-[24px] text-[#8a8a8a]" />
        <Icon name="times" className="mt-[21px] ml-[16px] h-[20px] w-[19px] text-[#8a8a8a]" />
        <Badge className="ml-auto">4</Badge>
        <div className="mt-[6px] ml-[22px] flex h-[52px] w-[300px] items-start justify-between rounded-[7px] border-2 border-[#ced4da] bg-white pr-[24px] pl-4 text-[21px] leading-[45px] text-[#495057]">
          <span>Select Report...</span>
          <svg viewBox="0 0 17 20" className="mt-[14px] h-5 w-[17px]" fill="#343a40">
            <path d="M0 8L8.500 0L17 8ZM0 12L8.500 20L17 12Z" />
          </svg>
        </div>
      </div>
      <ReportTable />
      <a className="flex items-center justify-end gap-[6px] pt-px text-2xl leading-7 text-[#4f98bd]">
        <Icon name="expand" className="h-[21px] w-[21px]" />
        Enter Full Screen
      </a>
    </section>
  );
}

export default function App() {
  return (
    <div className="h-[1560px] w-[2390px] overflow-hidden bg-white font-['Open_Sans',sans-serif]">
      <Header />
      <Nav />
      <main className="flex items-start pl-6">
        <LeftColumn />
        <RightColumn />
      </main>
    </div>
  );
}
